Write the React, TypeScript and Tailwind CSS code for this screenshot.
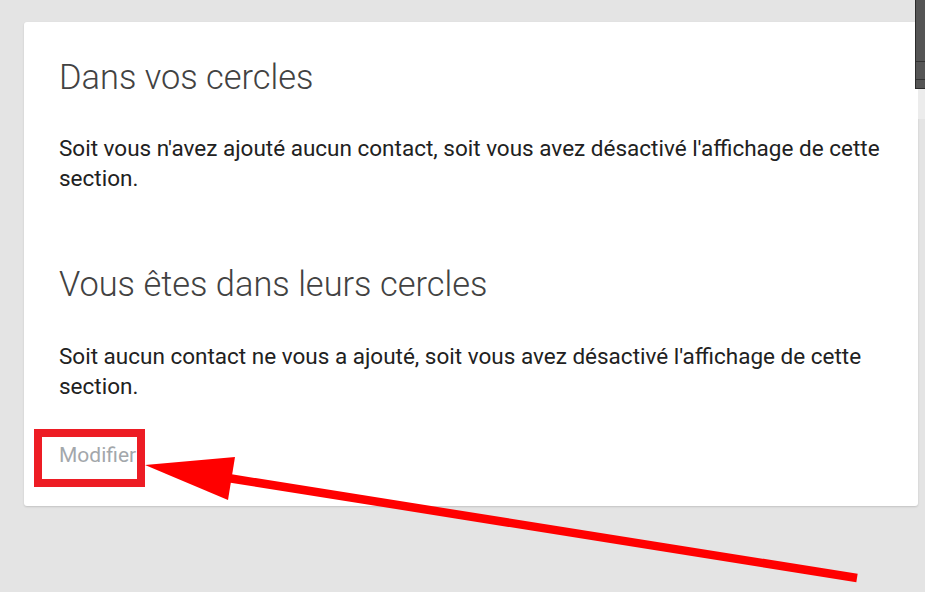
export default function App() {
  return (
    <div className="relative min-h-[592px] w-[925px] overflow-hidden bg-[#e4e4e4] pt-[22px] pl-[24px] font-['Roboto',sans-serif]">
      <div className="w-[894px] rounded-[3px] bg-white px-[35px] pt-[35px] pb-[36px] shadow-[0_1px_2px_rgba(0,0,0,0.15)]">
        <h2 className="text-[34.4px] leading-[40px] font-light text-[#424242]">Dans vos cercles</h2>
        <p className="mt-[36px] text-[22.5px] leading-[30px] text-[#212121]">
          Soit vous n'avez ajouté aucun contact, soit vous avez désactivé l'affichage de cette section.
        </p>

        <h2 className="mt-[71px] text-[34.4px] leading-[40px] font-light text-[#424242]">Vous êtes dans leurs cercles</h2>
        <p className="mt-[37px] text-[22.5px] leading-[30px] text-[#212121]">
          Soit aucun contact ne vous a ajouté, soit vous avez désactivé l'affichage de cette section.
        </p>

        <div className="mt-[39px]">
          <a href="#" className="text-[21px] leading-[30px] text-[#a3a7ab]">Modifier</a>
        </div>
      </div>

      {/* annotation: red box + arrow */}
      <div className="absolute left-[34px] top-[429px] h-[58px] w-[111px] border-[8px] border-[#ed1c24]" />
      <svg className="absolute inset-0 pointer-events-none" width="925" height="592" viewBox="0 0 925 592">
        <line x1="228" y1="478" x2="857" y2="578" stroke="#ff0000" strokeWidth="8.5" />
        <polygon points="145,465 235,457 228,500" fill="#ff0000" />
      </svg>

      {/* scroll widget at top right */}
      <div className="absolute right-0 top-0 flex h-[89px] w-[10px] flex-col border-l border-b border-[#2b2b2b] bg-[#555555]">
        <div className="h-[62px] border-b border-[#333333]" />
        <div className="h-[18px] border-b border-[#333333]" />
      </div>
      <div className="absolute right-0 top-[89px] h-[30px] w-[7px] bg-[#ececec]" />
    </div>
  );
}
